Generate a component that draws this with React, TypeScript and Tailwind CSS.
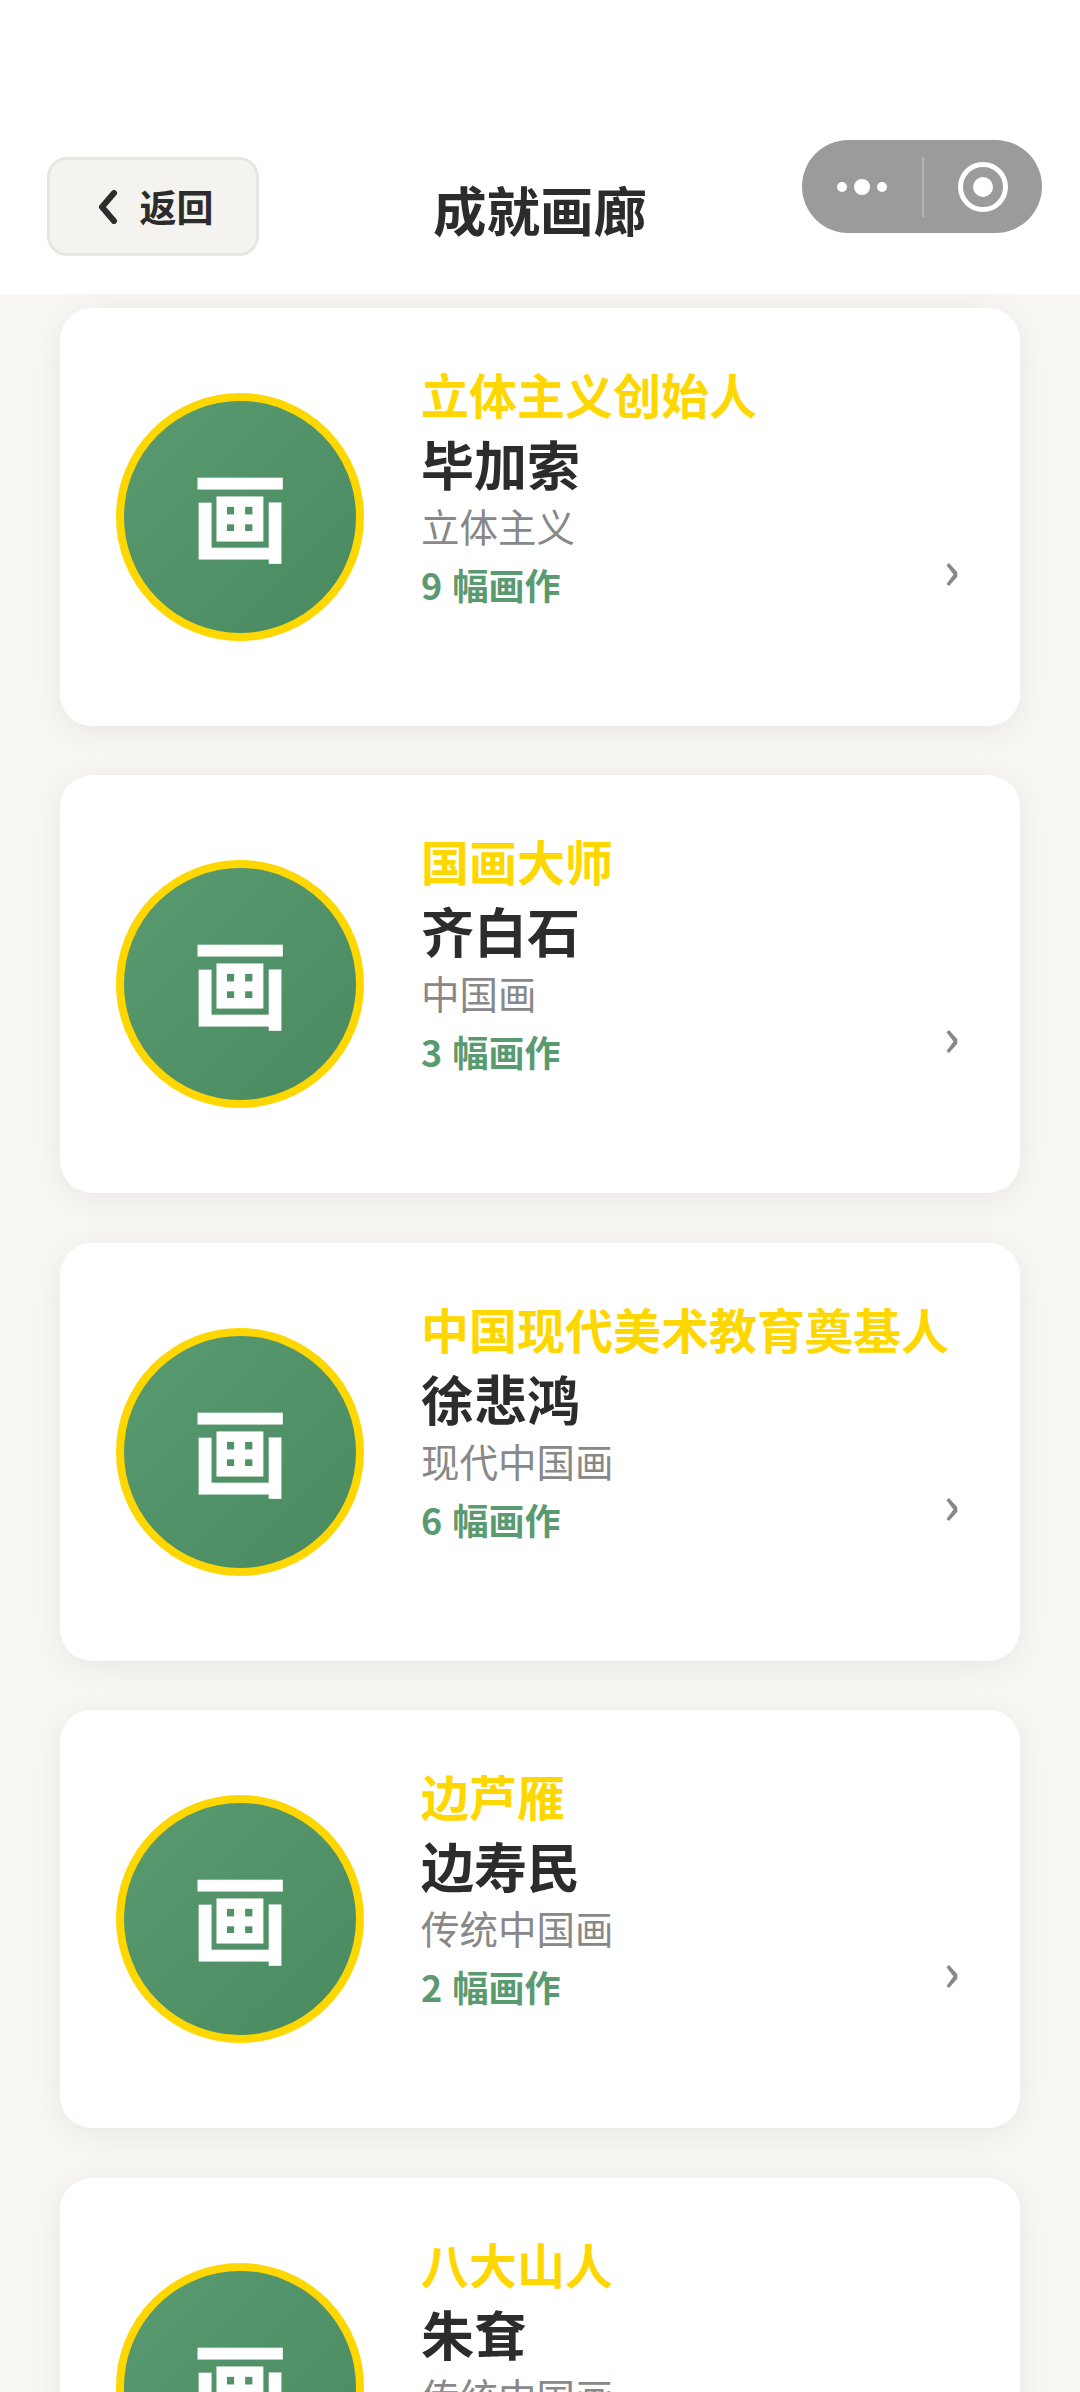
const cjk = "font-['Noto_Sans_CJK_SC',sans-serif]"

const artists = [
  { title: '立体主义创始人', name: '毕加索', genre: '立体主义', count: 9 },
  { title: '国画大师', name: '齐白石', genre: '中国画', count: 3 },
  { title: '中国现代美术教育奠基人', name: '徐悲鸿', genre: '现代中国画', count: 6 },
  { title: '边芦雁', name: '边寿民', genre: '传统中国画', count: 2 },
  { title: '八大山人', name: '朱耷', genre: '传统中国画', count: 4 },
]

function ArtistCard({ title, name, genre, count }: (typeof artists)[number]) {
  return (
    <div className="flex h-[418px] shrink-0 items-center rounded-[32px] bg-white pl-[56px] pr-[60px] shadow-[0_6px_36px_rgba(0,0,0,0.07)]">
      <div className="flex h-[248px] w-[248px] shrink-0 items-center justify-center rounded-full border-[8px] border-[#ffd700] bg-gradient-to-br from-[#5a9a70] to-[#4a8a60]">
        <span className="pb-[8px] text-[96px] font-bold leading-none text-white [-webkit-text-stroke:1px_white]">画</span>
      </div>
      <div className="ml-[57px] flex min-w-0 flex-1 flex-col pb-[59px]">
        <div className="whitespace-nowrap text-[48px] font-bold leading-[60px] text-[#ffd700]">{title}</div>
        <div className="mt-[7px] text-[53px] font-bold leading-[66px] text-[#2c2c2c]">{name}</div>
        <div className="mt-[1px] text-[38.5px] leading-[56px] text-[#888888]">{genre}</div>
        <div className="mt-[3px] text-[36px] font-bold leading-[56px] text-[#5a9a70]">
          <span className="mr-[2px]">{count}</span> 幅画作
        </div>
      </div>
      <span className="mb-[-100px] text-[54px] font-medium leading-none text-[#888888]">›</span>
    </div>
  )
}

export default function App() {
  return (
    <div className={`flex h-[2392px] flex-col overflow-hidden bg-[#f8f7f4] ${cjk}`}>
      <header className="relative flex h-[294px] shrink-0 items-end justify-center bg-white pb-[53px]">
        <button className="absolute left-[47px] top-[157px] flex h-[99px] w-[212px] items-center justify-center gap-[22px] rounded-[20px] border-[3px] border-[#e8e6e0] bg-[#f5f3ef] pl-[5px] text-[37px] font-bold text-[#2c2c2c]">
          <svg width="20" height="34" viewBox="0 0 20 34" fill="none" stroke="#2c2c2c" strokeWidth="6" strokeLinecap="round" strokeLinejoin="round">
            <path d="M16 3 L4 17 L16 31" />
          </svg>
          返回
        </button>
        <h1 className="text-[53.5px] font-bold leading-[64px] text-[#2c2c2c]">成就画廊</h1>
        <div className="absolute left-[802px] top-[140px] flex h-[93px] w-[240px] items-center rounded-full bg-[#9b9b9b]">
          <div className="flex w-[120px] items-center justify-center gap-[7px]">
            <i className="h-[10px] w-[10px] rounded-full bg-white" />
            <i className="h-[16px] w-[16px] rounded-full bg-white" />
            <i className="h-[10px] w-[10px] rounded-full bg-white" />
          </div>
          <div className="h-[60px] w-[2px] bg-[#b5b5b5]" />
          <div className="flex flex-1 items-center justify-center">
            <div className="flex h-[50px] w-[50px] items-center justify-center rounded-full border-[5px] border-white">
              <div className="h-[20px] w-[20px] rounded-full bg-white" />
            </div>
          </div>
        </div>
      </header>
      <main className="flex flex-col gap-[49.5px] px-[60px] pt-[13.5px]">
        {artists.map((a) => (
          <ArtistCard key={a.name} {...a} />
        ))}
      </main>
    </div>
  )
}
